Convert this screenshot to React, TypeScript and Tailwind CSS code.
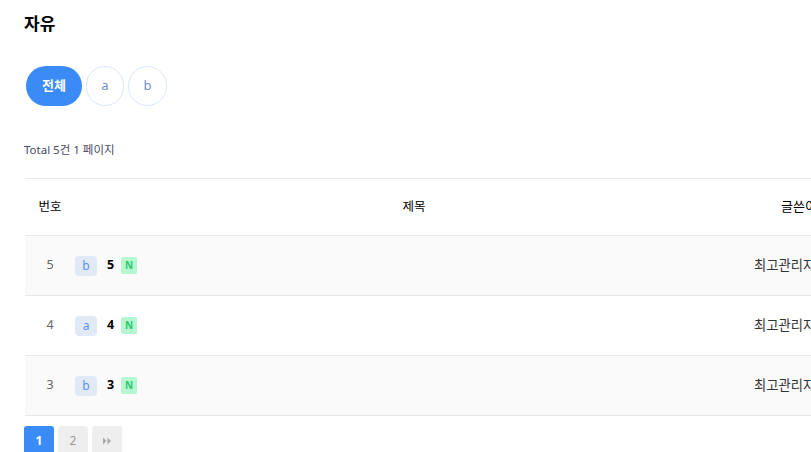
import React from "react";

const rows = [
  { no: 5, cat: "b", title: "5", bg: "bg-[#fafafa]" },
  { no: 4, cat: "a", title: "4", bg: "bg-white" },
  { no: 3, cat: "b", title: "3", bg: "bg-[#fafafa]" },
];

export default function App() {
  return (
    <div
      className="w-[811px] h-[452px] overflow-hidden bg-white"
      style={{ fontFamily: '"Noto Sans", "Noto Sans CJK KR", sans-serif' }}
    >
      <div className="w-[1000px] pl-6 pt-[12px]">
        <h1 className="text-[17px] leading-[24px] font-bold text-black">자유</h1>

        <div className="mt-[30px] ml-[2px] flex gap-[4px]">
          <button className="h-[40px] w-[56px] rounded-full bg-[#3a8bf6] text-[13px] font-bold text-white">
            전체
          </button>
          <button className="h-[40px] w-[38px] rounded-full border border-[#d9e6fb] bg-white text-[13px] text-[#6e8fd0]">
            a
          </button>
          <button className="h-[40px] w-[39px] rounded-full border border-[#d9e6fb] bg-white text-[13px] text-[#6e8fd0]">
            b
          </button>
        </div>

        <div className="mt-[36px] text-[11.5px] leading-[16px] text-[#4a4a66]">Total 5건 1 페이지</div>

        <div className="mt-[20px] ml-px w-[960px]">
          <div className="grid h-[58px] grid-cols-[50px_678px_1fr] items-center border-y border-[#e8e8e8] text-[12.5px] text-black">
            <div className="text-center">번호</div>
            <div className="text-center">제목</div>
            <div className="pl-[28px] text-[13px]">글쓴이</div>
          </div>
          {rows.map((r) => (
            <div
              key={r.no}
              className={`grid h-[60px] grid-cols-[50px_678px_1fr] items-center border-b border-[#e8e8e8] text-[12.5px] ${r.bg}`}
            >
              <div className="text-center text-[#666]">{r.no}</div>
              <div className="flex items-center">
                <span className="flex h-[20px] w-[22px] items-center justify-center rounded-[4px] bg-[#e1e9f7] text-[12px] text-[#5396f5]">
                  {r.cat}
                </span>
                <span className="ml-[10px] font-bold text-black">{r.title}</span>
                <span className="ml-[7px] flex h-[17px] w-[16px] items-center justify-center rounded-[2px] bg-[#b4f7d0] text-[10px] font-bold text-[#2dc76a]">
                  N
                </span>
              </div>
              <div className="pl-px text-[13.3px] text-[#333]">최고관리자</div>
            </div>
          ))}
        </div>

        <div className="mt-[10px] flex gap-[4px]">
          <button className="flex h-[30px] w-[30px] items-center justify-center rounded-[3px] bg-[#3a8bf6] text-[12px] font-bold text-white">
            1
          </button>
          <button className="flex h-[30px] w-[30px] items-center justify-center rounded-[3px] bg-[#eeeeee] text-[12px] text-[#999]">
            2
          </button>
          <button className="flex h-[30px] w-[30px] items-center justify-center rounded-[3px] bg-[#eeeeee]">
            <svg width="10" height="8" viewBox="0 0 10 8">
              <path d="M1 0.5 L4.5 4 L1 7.5 Z" fill="#aaa" />
              <path d="M5.5 0.5 L9 4 L5.5 7.5 Z" fill="#aaa" />
            </svg>
          </button>
        </div>
      </div>
    </div>
  );
}
